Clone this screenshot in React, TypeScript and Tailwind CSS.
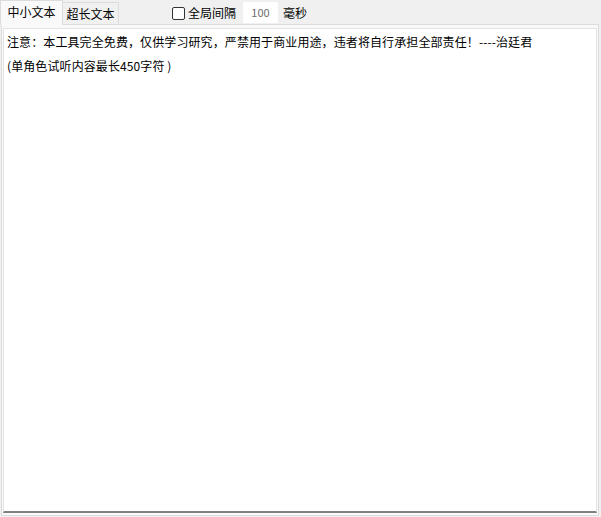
const FONT = "font-['Noto_Sans_CJK_SC','Microsoft_YaHei',sans-serif]";

export default function App() {
  return (
    <div className={`w-[601px] h-[517px] bg-[#f0f0f0] text-[12px] text-[#000] ${FONT}`}>
      {/* tab strip + options */}
      <div className="flex items-start h-[24px]">
        <div className="relative z-10 w-[63px] h-[25px] bg-[#f9f9f9] border border-b-0 border-[#dcdcdc] flex items-center justify-center pb-[2px] leading-none">
          中小文本
        </div>
        <div className="w-[56px] h-[22px] mt-[2px] bg-[#f0f0f0] border border-l-0 border-b-0 border-[#dcdcdc] flex items-center justify-center leading-none">
          超长文本
        </div>

        <label className="ml-[53px] mt-[7px] flex items-center leading-none">
          <span className="w-[13px] h-[13px] border border-[#333] rounded-[2px] bg-white" />
          <span className="ml-[3px] -mt-[1px]">全局间隔</span>
        </label>
        <div className="ml-[7px] mt-[2px] w-[35px] h-[21px] bg-white flex items-center justify-center text-[11px] text-[#6d6d6d] leading-none">
          100
        </div>
        <div className="ml-[5px] mt-[7px] leading-none">毫秒</div>
      </div>

      {/* tab page */}
      <div className="ml-[1px] w-[598px] h-[492px] border border-[#dcdcdc] bg-[#f9f9f9] pt-[3px] pl-px pr-px pb-[2px]">
        <div className="h-full bg-white border border-[#e3e3e3] border-b-2 border-b-[#808080] pl-[3px] pt-px leading-[24px] tracking-[0.1px]">
          <p>注意：本工具完全免费，仅供学习研究，严禁用于商业用途，违者将自行承担全部责任！----治廷君</p>
          <p>(单角色试听内容最长450字符 )</p>
        </div>
      </div>
    </div>
  );
}
